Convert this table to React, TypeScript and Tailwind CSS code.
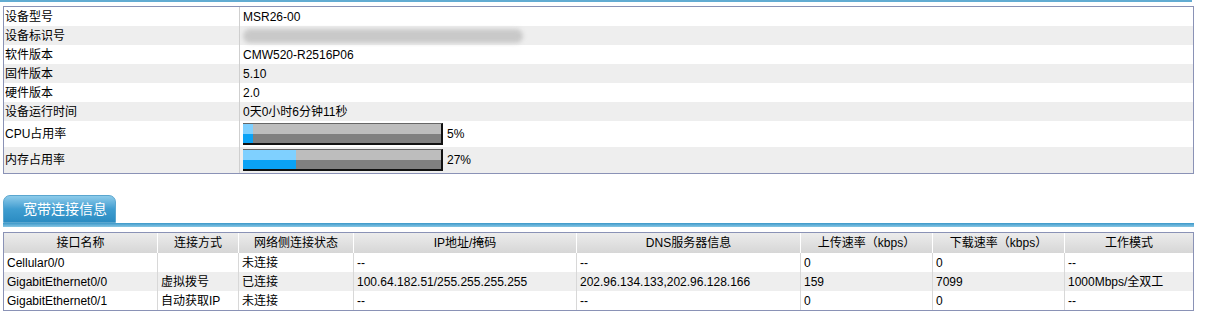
import React from 'react';

const font = { fontFamily: '"Liberation Sans", Arial, "Noto Sans CJK SC", sans-serif' };

const info = [
  ['设备型号', 'MSR26-00'],
  ['设备标识号', ''],
  ['软件版本', 'CMW520-R2516P06'],
  ['固件版本', '5.10'],
  ['硬件版本', '2.0'],
  ['设备运行时间', '0天0小时6分钟11秒'],
];

function Bar({ pct }: { pct: number }) {
  return (
    <div className="flex items-center">
      <div className="relative w-[200px] h-[22px] border-t border-t-[#666] border-b-2 border-b-[#111] border-r-2 border-r-[#111] flex flex-col">
        <div className="h-1/2 bg-[#bdbdbd]" />
        <div className="h-1/2 bg-[#808080]" />
        <div className="absolute left-0 top-0 bottom-0 flex flex-col" style={{ width: `${pct}%` }}>
          <div className="h-1/2 bg-[#7fd0ff]" />
          <div className="h-1/2 bg-[#0aa2f5]" />
        </div>
      </div>
      <span className="ml-[4px]">{pct}%</span>
    </div>
  );
}

const cols = [
  { name: '接口名称', w: 'w-[154px]' },
  { name: '连接方式', w: 'w-[81px]' },
  { name: '网络侧连接状态', w: 'w-[115px]' },
  { name: 'IP地址/掩码', w: 'w-[223px]' },
  { name: 'DNS服务器信息', w: 'w-[224px]' },
  { name: '上传速率（kbps）', w: 'w-[132px]' },
  { name: '下载速率（kbps）', w: 'w-[132px]' },
  { name: '工作模式', w: 'flex-1' },
];

const rows = [
  ['Cellular0/0', '', '未连接', '--', '--', '0', '0', '--'],
  ['GigabitEthernet0/0', '虚拟拨号', '已连接', '100.64.182.51/255.255.255.255', '202.96.134.133,202.96.128.166', '159', '7099', '1000Mbps/全双工'],
  ['GigabitEthernet0/1', '自动获取IP', '未连接', '--', '--', '0', '0', '--'],
];

export default function App() {
  return (
    <div className="w-[1214px] h-[320px] bg-white text-[12px] text-black leading-none" style={font}>
      <div className="h-[2px] w-[1192px] bg-[#62acd2]" />
      <div className="mt-[4px] ml-[3px] w-[1191px] border border-[#8a92b6]">
        {info.map(([k, v], i) => (
          <div key={k} className={`flex h-[19px] items-center ${i % 2 ? 'bg-[#eeeeee]' : 'bg-white'}`}>
            <div className="w-[236px] pl-[1px] h-full flex items-center border-r border-[#cfcfcf]">{k}</div>
            <div className="pl-[3px] flex-1 h-full flex items-center">
              {i === 1 ? (
                <div className="w-[280px] h-[14px] rounded-full bg-[#c9c9c9] blur-[2px]" />
              ) : (
                v
              )}
            </div>
          </div>
        ))}
        <div className="flex h-[26px] items-center bg-white">
          <div className="w-[236px] pl-[1px] h-full flex items-center border-r border-[#cfcfcf]">CPU占用率</div>
          <div className="pl-[3px] flex-1"><Bar pct={5} /></div>
        </div>
        <div className="flex h-[26px] items-center bg-[#eeeeee]">
          <div className="w-[236px] pl-[1px] h-full flex items-center border-r border-[#cfcfcf]">内存占用率</div>
          <div className="pl-[3px] flex-1"><Bar pct={27} /></div>
        </div>
      </div>

      <div className="mt-[21px] ml-[3px] w-[1191px]">
        <div className="flex items-end">
          <div className="w-[113px] h-[28px] rounded-t-[7px] bg-gradient-to-b from-[#8ccbea] via-[#3f9dd0] to-[#2b8cc2] border border-[#5aa6cf] flex items-center pl-[19px] text-white text-[14px]">
            宽带连接信息
          </div>
        </div>
        <div className="h-[4px] bg-gradient-to-b from-[#3a98c9] to-[#86c6e4]" />
      </div>

      <div className="mt-[5px] ml-[3px] w-[1191px] border border-[#8a92b6]">
        <div className="flex h-[20px] bg-gradient-to-b from-[#ececec] to-[#d6d6d6]">
          {cols.map((c, i) => (
            <div key={c.name} className={`${c.w} h-full flex items-center justify-center ${i < cols.length - 1 ? 'border-r border-white' : ''}`}>
              {c.name}
            </div>
          ))}
        </div>
        {rows.map((r, ri) => (
          <div key={ri} className={`flex h-[19px] ${ri % 2 ? 'bg-[#eeeeee]' : 'bg-white'}`}>
            {r.map((cell, ci) => (
              <div key={ci} className={`${cols[ci].w} h-full flex items-center pl-[3px] ${ci < r.length - 1 ? 'border-r border-[#d8d8d8]' : ''}`}>
                {cell}
              </div>
            ))}
          </div>
        ))}
      </div>
    </div>
  );
}
